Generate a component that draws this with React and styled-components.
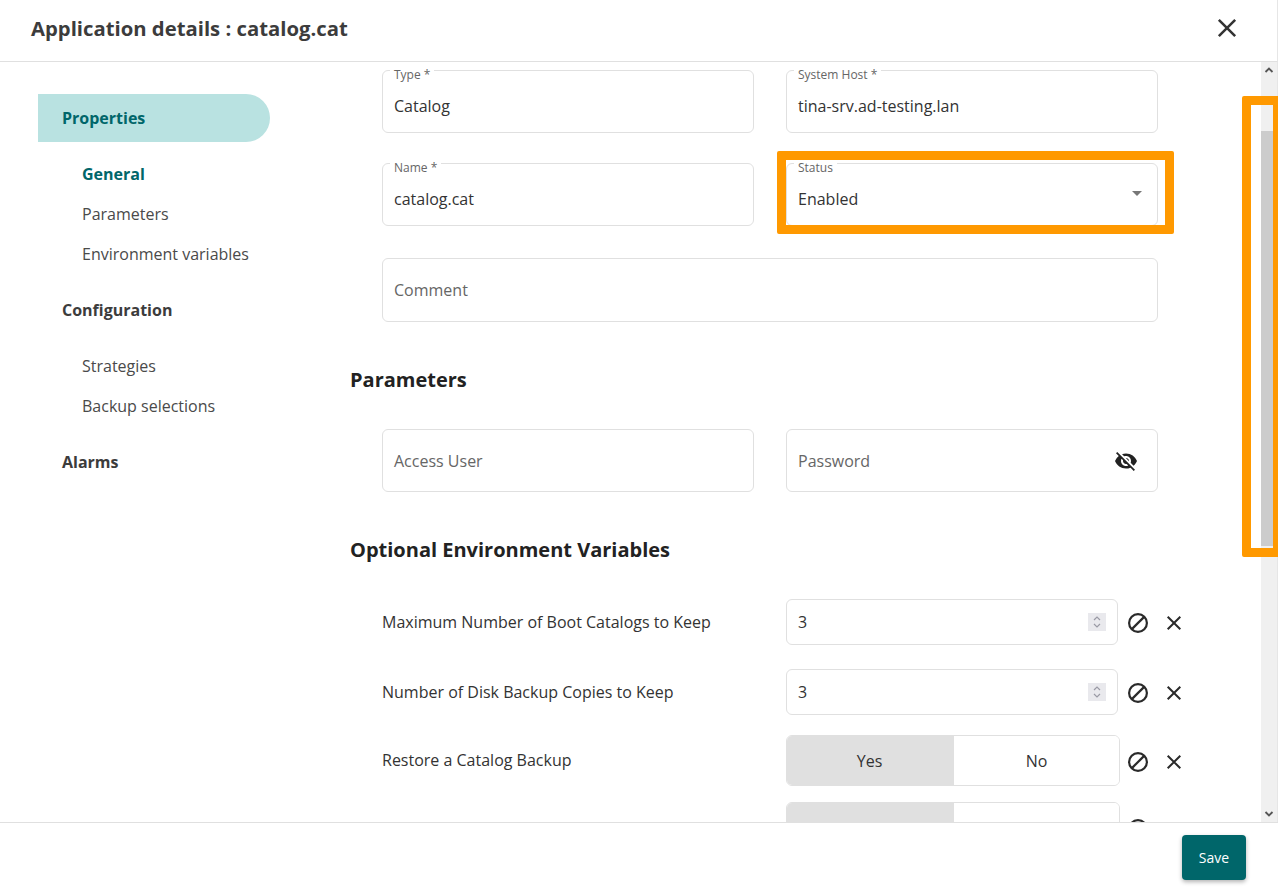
import React from 'react'
import styled, { createGlobalStyle } from 'styled-components'
import { MdVisibilityOff, MdArrowDropDown } from 'react-icons/md'

const Global = createGlobalStyle`
html,body{
  margin:0;
  padding:0;
  background:#fff;
  font-family:"Open Sans","Liberation Sans",sans-serif;
}
*{box-sizing:border-box;}
`
const Page = styled.div`
position:relative;
width:1278px;
height:888px;
display:flex;
flex-direction:column;
overflow:hidden;
background:#fff;
`
const Header = styled.header`
height:62px;
flex:none;
display:flex;
align-items:center;
justify-content:space-between;
padding:0 36px 6px 31px;
border-bottom:1px solid #e0e0e0;
border-right:1px solid #e6e6e6;
`
const Title = styled.h1`
margin:0;
font-size:20.3px;
line-height:28px;
font-weight:700;
color:#3c3c3c;
`
const Body = styled.div`
flex:1;
min-height:0;
display:flex;
`
const Side = styled.nav`
width:350px;
flex:none;
padding-top:32px;
padding-left:38px;
`
const Pill = styled.div`
width:232px;
height:48px;
display:flex;
align-items:center;
padding-left:24px;
margin-bottom:12px;
font-size:16px;
font-weight:700;
color:${(props) => (props.$active ? '#00666a' : '#3c3c3c')};
background:${(props) => (props.$active ? '#b9e2e1' : 'transparent')};
border-radius:0 24px 24px 0;
`
const SubItem = styled.div`
height:40px;
display:flex;
align-items:center;
padding-left:44px;
font-size:16px;
font-weight:${(props) => (props.$active ? 700 : 400)};
color:${(props) => (props.$active ? '#00666a' : '#4a4a4a')};
`
const SubGroup = styled.div`
margin-bottom:12px;
`
const Content = styled.main`
flex:1;
min-width:0;
height:760px;
overflow:hidden;
padding-top:8px;
`
const FormGrid = styled.div`
display:grid;
grid-template-columns:372px 372px;
column-gap:32px;
row-gap:30px;
margin-left:32px;
width:776px;
`
const Field = styled.div`
position:relative;
height:${(props) => props.$h || 63}px;
grid-column:${(props) => (props.$wide ? '1 / span 2' : 'auto')};
margin-top:${(props) => (props.$wide ? 2 : 0)}px;
display:flex;
align-items:center;
justify-content:space-between;
padding:${(props) => (props.$label ? '8px 11px 0' : '0 11px')};
border:1px solid #e0e0e0;
border-radius:6px;
font-size:16px;
color:#333;
`
const Legend = styled.span`
position:absolute;
top:-4px;
left:7px;
padding:0 4px;
background:#fff;
font-size:12px;
line-height:16px;
color:#666;
`
const Placeholder = styled.span`
color:#666;
`
const EyeIcon = styled(MdVisibilityOff)`
font-size:24px;
color:#222;
margin-right:8px;
`
const Caret = styled(MdArrowDropDown)`
font-size:24px;
color:#777;
margin:-12px -3px 0 0;
`
const Heading = styled.h2`
margin:44px 0 35px 0;
font-size:20px;
line-height:28px;
font-weight:700;
color:#222;
`
const VarRow = styled.div`
display:grid;
grid-template-columns:404px 340px 24px 12px 24px;
align-items:center;
margin-left:32px;
margin-bottom:${(props) => props.$mb}px;
`
const VarLabel = styled.span`
font-size:16px;
color:#333;
padding-bottom:${(props) => (props.$raised ? 1 : 0)}px;
`
const NumBox = styled.div`
width:332px;
height:46px;
display:flex;
align-items:center;
justify-content:space-between;
padding:0 11px;
border:1px solid #e0e0e0;
border-radius:6px;
font-size:16px;
color:#333;
`
const Stepper = styled.span`
width:18px;
height:18px;
display:flex;
align-items:center;
justify-content:center;
background:#e9e9ed;
`
const Toggle = styled.div`
width:334px;
height:51px;
display:flex;
border:1px solid #e0e0e0;
border-radius:6px;
overflow:hidden;
`
const ToggleOption = styled.div`
flex:${(props) => (props.$on ? '0 0 167px' : 1)};
display:flex;
align-items:center;
justify-content:center;
padding-right:${(props) => (props.$on ? 2 : 0)}px;
font-size:16px;
color:#333;
background:${(props) => (props.$on ? '#e0e0e0' : '#fff')};
`
const Track = styled.div`
width:17px;
flex:none;
height:760px;
background:#f0f0f0;
display:flex;
flex-direction:column;
border-right:1px solid #e6e6e6;
`
const ArrowBox = styled.div`
height:16px;
flex:none;
display:flex;
align-items:center;
justify-content:center;
`
const Gutter = styled.div`
flex:1;
padding-top:53px;
padding-bottom:260px;
`
const Thumb = styled.div`
height:100%;
background:#ccc;
`
const Footer = styled.footer`
height:66px;
flex:none;
display:flex;
justify-content:flex-end;
align-items:flex-start;
padding:12px 32px 0 0;
border-top:1px solid #e0e0e0;
background:#fff;
`
const SaveButton = styled.button`
width:64px;
height:45px;
border:none;
border-radius:4px;
background:#00666a;
color:#fff;
font:500 14px "Open Sans","Liberation Sans",sans-serif;
box-shadow:0 2px 4px rgba(0,0,0,.3);
`
const Highlight = styled.div`
position:absolute;
left:${(props) => props.$x}px;
top:${(props) => props.$y}px;
width:${(props) => props.$w}px;
height:${(props) => props.$h}px;
border:9px solid #ff9900;
border-radius:2px;
pointer-events:none;
`
const RowGlyph = styled.svg`
margin-top:${(props) => (props.$toggle ? 3 : 2)}px;
`
const CloseGlyph = ({ size = 24, sw = 2.2, color = '#333' }) => (
  <svg width={size} height={size} viewBox="0 0 24 24" fill="none" stroke={color} strokeWidth={sw}>
    <path d="M5 5l14 14M19 5L5 19" />
  </svg>
)
const RowIcons = ({ toggle }) => (
  <>
    <RowGlyph $toggle={toggle} width="24" height="24" viewBox="0 0 24 24" fill="none" stroke="#2a2a2a" strokeWidth="2.2">
      <circle cx="12" cy="12" r="8.900" />
      <path d="M18.400 5.600L5.600 18.400" />
    </RowGlyph>
    <span />
    <RowGlyph $toggle={toggle} width="24" height="24" viewBox="0 0 24 24" fill="none" stroke="#2a2a2a" strokeWidth="2">
      <path d="M5.700 5.700l12.600 12.600M18.300 5.700L5.700 18.300" />
    </RowGlyph>
  </>
)
const Spin = () => (
  <Stepper>
    <svg width="10" height="14" viewBox="0 0 10 14" fill="none" stroke="#9a9aa5" strokeWidth="1.2">
      <path d="M2 5l3-3 3 3M2 9l3 3 3-3" />
    </svg>
  </Stepper>
)

export default function App() {
  return (
    <Page>
      <Global />
      <Header>
        <Title>Application details : catalog.cat</Title>
        <CloseGlyph size={28} />
      </Header>
      <Body>
        <Side>
          <Pill $active>Properties</Pill>
          <SubGroup>
            <SubItem $active>General</SubItem>
            <SubItem>Parameters</SubItem>
            <SubItem>Environment variables</SubItem>
          </SubGroup>
          <Pill>Configuration</Pill>
          <SubGroup>
            <SubItem>Strategies</SubItem>
            <SubItem>Backup selections</SubItem>
          </SubGroup>
          <Pill>Alarms</Pill>
        </Side>
        <Content>
          <FormGrid>
            <Field $label>
              <Legend>Type *</Legend>
              Catalog
            </Field>
            <Field $label>
              <Legend>System Host *</Legend>
              tina-srv.ad-testing.lan
            </Field>
            <Field $label>
              <Legend>Name *</Legend>
              catalog.cat
            </Field>
            <Field $label>
              <Legend>Status</Legend>
              Enabled
              <Caret />
            </Field>
            <Field $wide $h={64}>
              <Placeholder>Comment</Placeholder>
            </Field>
          </FormGrid>
          <Heading>Parameters</Heading>
          <FormGrid>
            <Field>
              <Placeholder>Access User</Placeholder>
            </Field>
            <Field>
              <Placeholder>Password</Placeholder>
              <EyeIcon />
            </Field>
          </FormGrid>
          <Heading>Optional Environment Variables</Heading>
          <VarRow $mb={24}>
            <VarLabel>Maximum Number of Boot Catalogs to Keep</VarLabel>
            <NumBox>3<Spin /></NumBox>
            <RowIcons />
          </VarRow>
          <VarRow $mb={20}>
            <VarLabel>Number of Disk Backup Copies to Keep</VarLabel>
            <NumBox>3<Spin /></NumBox>
            <RowIcons />
          </VarRow>
          <VarRow $mb={16}>
            <VarLabel $raised>Restore a Catalog Backup</VarLabel>
            <Toggle>
              <ToggleOption $on>Yes</ToggleOption>
              <ToggleOption>No</ToggleOption>
            </Toggle>
            <RowIcons toggle />
          </VarRow>
          <VarRow $mb={0}>
            <VarLabel>Restore a Disk Backup Copy</VarLabel>
            <Toggle>
              <ToggleOption $on>Yes</ToggleOption>
              <ToggleOption>No</ToggleOption>
            </Toggle>
            <RowIcons toggle />
          </VarRow>
        </Content>
        <Track>
          <ArrowBox>
            <svg width="10" height="8" viewBox="0 0 10 8" fill="none" stroke="#555" strokeWidth="1.8">
              <path d="M1.500 6L5 2.500 8.500 6" />
            </svg>
          </ArrowBox>
          <Gutter>
            <Thumb />
          </Gutter>
          <ArrowBox>
            <svg width="10" height="8" viewBox="0 0 10 8" fill="none" stroke="#555" strokeWidth="1.8">
              <path d="M1.500 2L5 5.500 8.500 2" />
            </svg>
          </ArrowBox>
        </Track>
      </Body>
      <Footer>
        <SaveButton>Save</SaveButton>
      </Footer>
      <Highlight $x={777} $y={151} $w={397} $h={83} />
      <Highlight $x={1242} $y={96} $w={40} $h={461} />
    </Page>
  )
}
